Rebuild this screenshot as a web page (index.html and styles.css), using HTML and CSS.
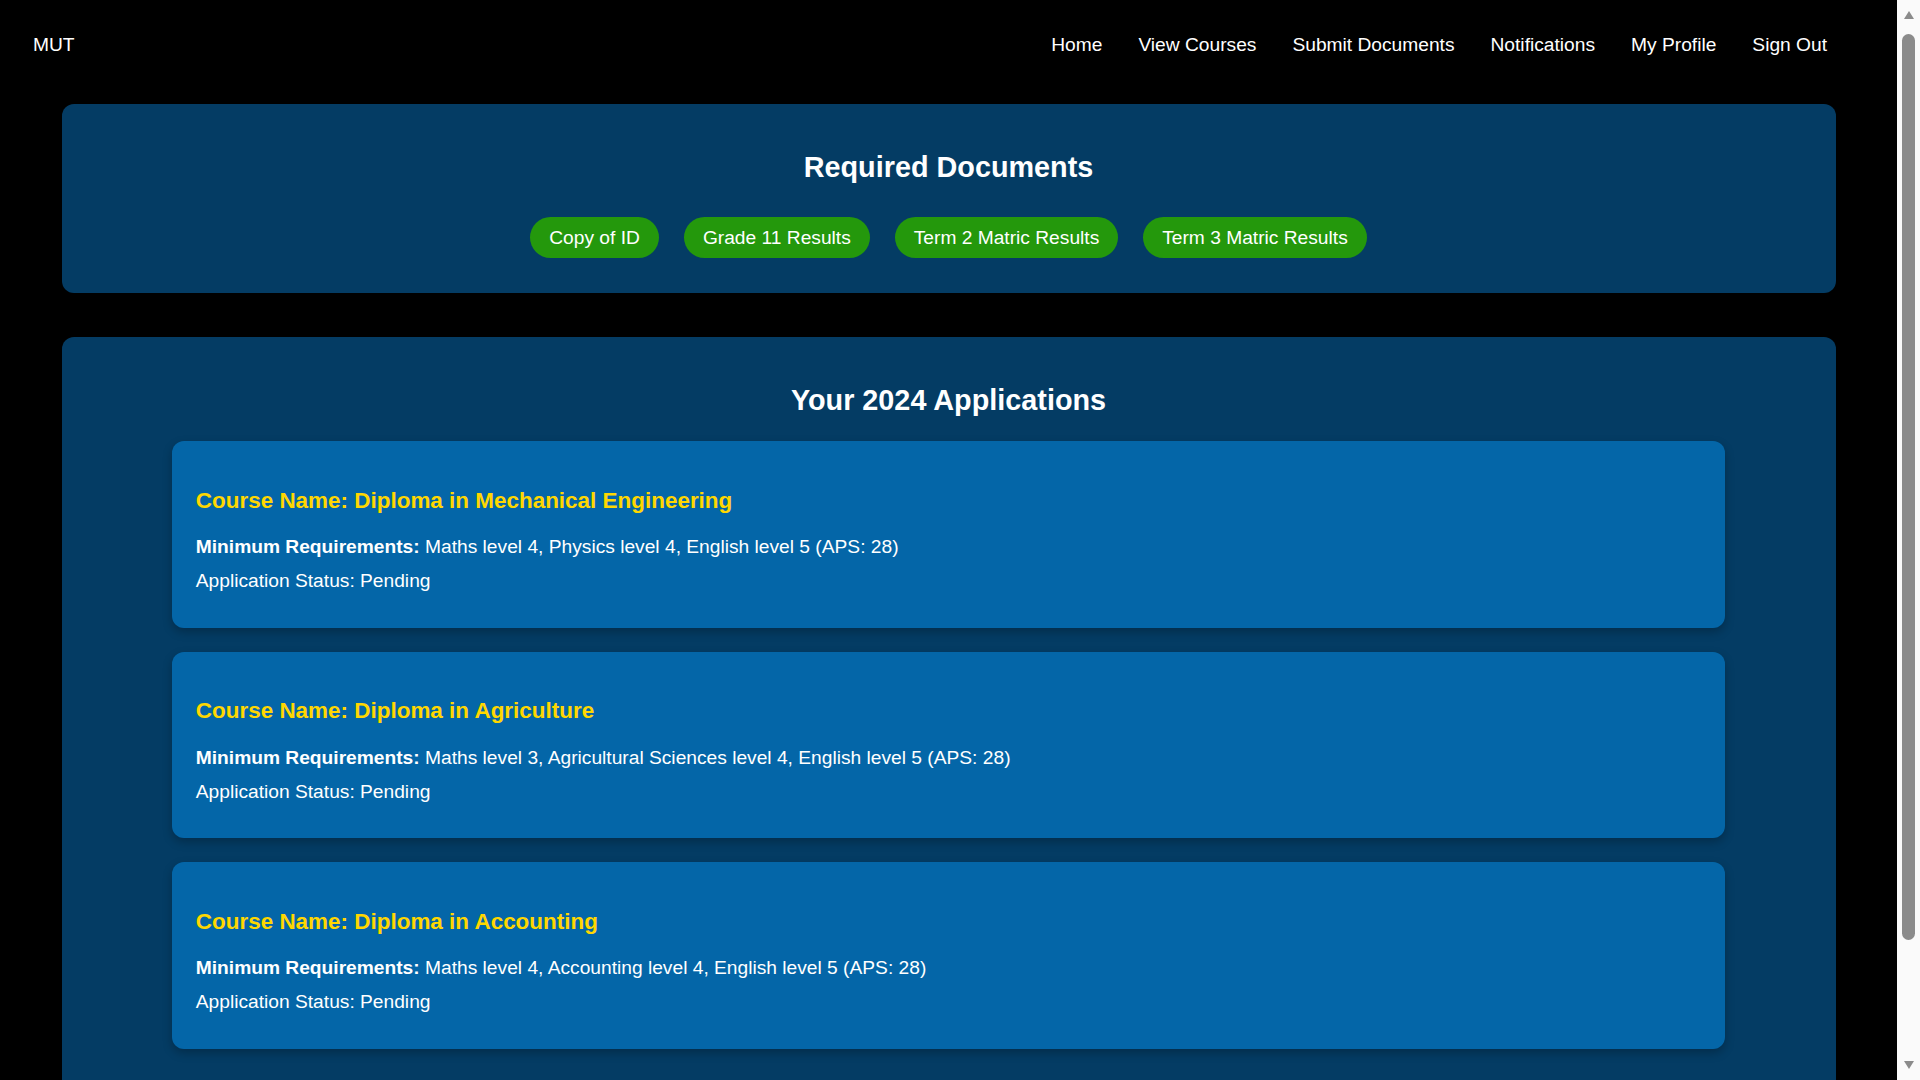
FILE: index.html
```html
<!DOCTYPE html>
<html lang="en">
<head>
<meta charset="utf-8">
<title>MUT - Applications</title>
<link rel="stylesheet" href="styles.css">
</head>
<body>
<header class="topbar">
  <div class="brand">MUT</div>
  <nav class="nav">
    <a href="#">Home</a>
    <a href="#">View Courses</a>
    <a href="#">Submit Documents</a>
    <a href="#">Notifications</a>
    <a href="#">My Profile</a>
    <a href="#">Sign Out</a>
  </nav>
</header>

<section class="panel">
  <h2 class="panel-title">Required Documents</h2>
  <div class="doc-list">
    <span class="doc">Copy of ID</span>
    <span class="doc">Grade 11 Results</span>
    <span class="doc">Term 2 Matric Results</span>
    <span class="doc">Term 3 Matric Results</span>
  </div>
</section>

<section class="panel">
  <h2 class="panel-title">Your 2024 Applications</h2>
  <div class="app-card">
    <h3 class="course">Course Name: Diploma in Mechanical Engineering</h3>
    <p class="line"><strong>Minimum Requirements:</strong> Maths level 4, Physics level 4, English level 5 (APS: 28)</p>
    <p class="line">Application Status: Pending</p>
  </div>
  <div class="app-card">
    <h3 class="course">Course Name: Diploma in Agriculture</h3>
    <p class="line"><strong>Minimum Requirements:</strong> Maths level 3, Agricultural Sciences level 4, English level 5 (APS: 28)</p>
    <p class="line">Application Status: Pending</p>
  </div>
  <div class="app-card">
    <h3 class="course">Course Name: Diploma in Accounting</h3>
    <p class="line"><strong>Minimum Requirements:</strong> Maths level 4, Accounting level 4, English level 5 (APS: 28)</p>
    <p class="line">Application Status: Pending</p>
  </div>
</section>

<div class="scrollbar" aria-hidden="true">
  <svg class="arrow arrow-up" width="12" height="10" viewBox="0 0 12 10"><polygon points="6,1 11,9 1,9" fill="#8b8b8b"/></svg>
  <div class="thumb"></div>
  <svg class="arrow arrow-down" width="12" height="10" viewBox="0 0 12 10"><polygon points="1,1 11,1 6,9" fill="#8b8b8b"/></svg>
</div>
</body>
</html>
```

FILE: styles.css
```css
html, body {
  margin: 0;
  padding: 0;
  background: #000;
}

body {
  font-family: "Liberation Sans", Arial, sans-serif;
  font-size: 19.2px;
  color: #fff;
  padding-right: 23px;
}

.topbar {
  display: flex;
  align-items: center;
  justify-content: space-between;
  height: 88px;
  padding: 1px 70px 0 33px;
  box-sizing: border-box;
  line-height: 22px;
}

.brand {
  font-size: 19.2px;
  color: #fff;
}

.nav {
  display: flex;
  gap: 36px;
}

.nav a {
  color: #fff;
  text-decoration: none;
  font-size: 19.2px;
}

.panel {
  background: #043c64;
  border-radius: 12px;
  margin: 16px 61.5px 44px;
  padding: 24px;
}

.panel-title {
  font-size: 28.8px;
  font-weight: bold;
  text-align: center;
  margin: 23px 0 24px;
  line-height: 33px;
}

.doc-list {
  display: flex;
  justify-content: center;
  gap: 24.6px;
  margin: 33px 0 11px;
}

.doc {
  display: inline-block;
  background: #24980c;
  color: #fff;
  border-radius: 22px;
  padding: 9.6px 19.2px;
  line-height: 22px;
}

.app-card {
  width: 90%;
  margin: 0 auto 24px;
  background: #0466a8;
  border-radius: 12px;
  padding: 24px 24px 23.5px;
  box-sizing: border-box;
  box-shadow: 0 4px 10px rgba(0, 0, 0, 0.25);
}

.course {
  color: #ffd700;
  font-size: 22.46px;
  line-height: 26px;
  margin: 22.5px 0 22.5px;
}

.line {
  margin: 12px 0;
  line-height: 22px;
}

.line strong {
  font-weight: bold;
}

.scrollbar {
  position: fixed;
  top: 0;
  right: 0;
  width: 23px;
  height: 100vh;
  background: #fafafa;
}

.arrow {
  position: absolute;
  left: 6px;
}

.arrow-up {
  top: 10px;
}

.arrow-down {
  bottom: 10px;
}

.thumb {
  position: absolute;
  left: 5px;
  top: 34px;
  width: 13px;
  height: 906px;
  background: #8b8b8b;
  border-radius: 7px;
}
```
